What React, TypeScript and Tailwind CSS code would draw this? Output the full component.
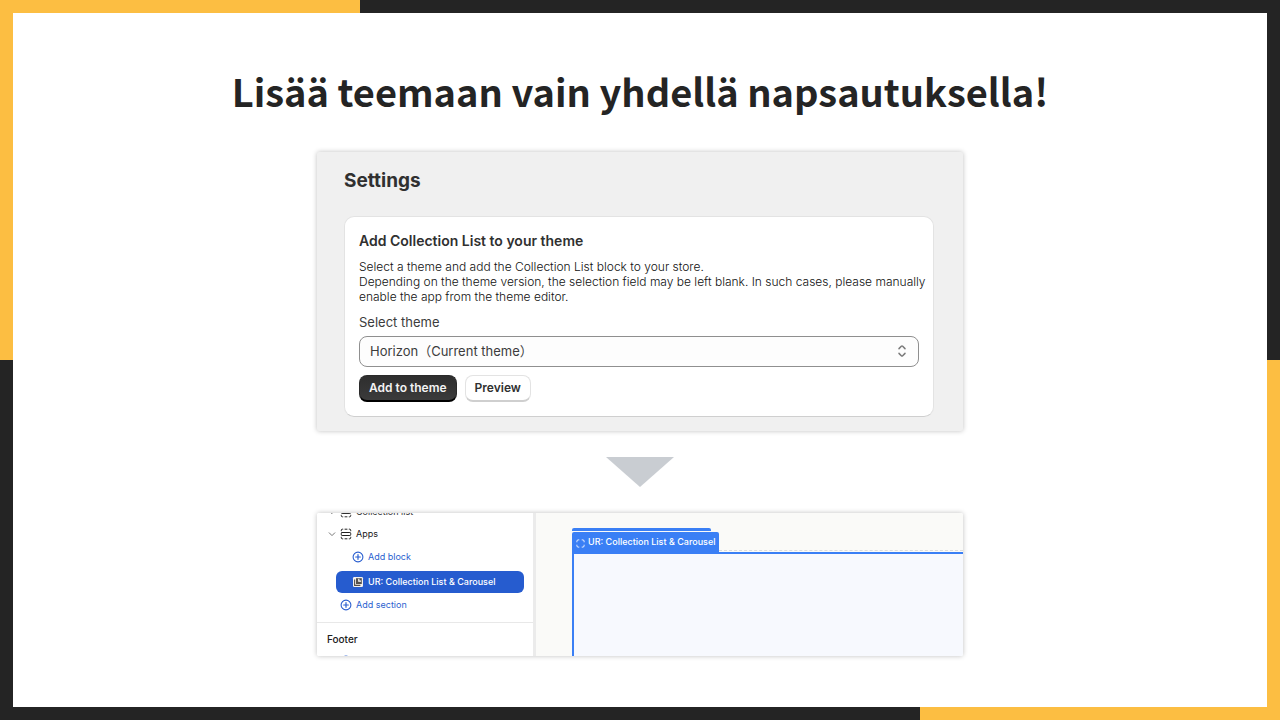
import type { ReactNode } from "react";

// --- Icons ------------------------------------------------------------------

function PlusCircleIcon() {
  return (
    <svg viewBox="0 0 12 12" className="h-3 w-3 shrink-0" fill="none" stroke="currentColor">
      <circle cx="6" cy="6" r="4.9" strokeWidth="1.1" />
      <path d="M6 3.7v4.6M3.7 6h4.6" strokeWidth="1.2" strokeLinecap="round" />
    </svg>
  );
}

function SectionIcon() {
  return (
    <svg viewBox="0 0 12 12" className="h-3 w-3 shrink-0" fill="none" stroke="currentColor" strokeLinecap="round">
      <path d="M1.3 2.8v-.6a1 1 0 0 1 1-1h.5M5 1.2h2M9.2 1.2h.5a1 1 0 0 1 1 1v.6" />
      <rect x="1.3" y="4.5" width="9.4" height="3" rx=".8" />
      <path d="M1.3 9.2v.6a1 1 0 0 0 1 1h.5M5 10.8h2M9.2 10.8h.5a1 1 0 0 0 1-1v-.6" />
    </svg>
  );
}

function ChevronIcon() {
  return (
    <svg viewBox="0 0 8 8" className="h-2 w-2 shrink-0" fill="none" stroke="#777" strokeLinecap="round" strokeLinejoin="round">
      <path d="M1.2 2.8 4 5.6l2.8-2.8" />
    </svg>
  );
}

function AppIcon() {
  return (
    <svg viewBox="0 0 12 12" className="h-3 w-3 shrink-0">
      <rect x="1" y="1" width="10" height="10" rx="1.2" fill="#f4f1ee" />
      <path d="M2.6 3.6v5.8h5.8" fill="none" stroke="#55504c" strokeWidth="1.1" />
      <rect x="4" y="2.2" width="5.8" height="5.8" fill="#55504c" />
      <path d="M6.2 2.8v3h2.9V4.4H7.4V2.8z" fill="#fff" />
    </svg>
  );
}

function BlockIcon() {
  return (
    <svg viewBox="0 0 10 10" className="mt-[2px] h-[9px] w-[9px] shrink-0" fill="none" stroke="currentColor" strokeLinecap="round">
      <path d="M1 3.2V2.4A1.4 1.4 0 0 1 2.4 1h.8M6.8 1h.8A1.4 1.4 0 0 1 9 2.4v.8M9 6.8v.8A1.4 1.4 0 0 1 7.6 9h-.8M3.2 9h-.8A1.4 1.4 0 0 1 1 7.6v-.8" />
    </svg>
  );
}

function SelectIcon() {
  return (
    <svg
      viewBox="0 0 10 14"
      className="pointer-events-none absolute right-3 top-2 h-[14px] w-[10px]"
      fill="none"
      stroke="#7a7a7a"
      strokeWidth="1.5"
      strokeLinecap="round"
      strokeLinejoin="round"
    >
      <path d="M2 4.6 4.3 2.3a1 1 0 0 1 1.4 0L8 4.6M2 9.4l2.3 2.3a1 1 0 0 0 1.4 0L8 9.4" />
    </svg>
  );
}

// --- Settings card ------------------------------------------------------------

function SettingsPanel() {
  return (
    <section className="w-full rounded-xs bg-[#f0f0f0] pt-[17px] pr-[29px] pb-[14px] pl-[27px] shadow-[0_0_5px_rgba(0,0,0,0.25)]">
      <h2 className="text-[19px] leading-6 font-bold text-[#303030]">Settings</h2>
      <div className="mt-[23px] rounded-[10px] border border-[#e3e3e3] border-b-[#cfcfcf] bg-white px-[14px] pt-[14px] pb-[14px]">
        <h3 className="text-[14px] leading-5 font-semibold text-[#303030]">
          Add Collection List to your theme
        </h3>
        <p className="-mr-3 mt-2 text-[12px] leading-[15px] font-light text-[#101010]">
          Select a theme and add the Collection List block to your store.
          <br />
          Depending on the theme version, the selection field may be left blank. In such cases, please manually
          enable the app from the theme editor.
        </p>
        <label htmlFor="theme" className="mt-2 block text-[13px] leading-5 text-[#3c3c3c]">
          Select theme
        </label>
        <div className="relative mt-1">
          <select
            id="theme"
            className="block h-[31px] w-full appearance-none rounded-lg border border-[#8f8f8f] bg-[#fdfdfd] px-[10px] text-[13px] text-[#3c3c3c]"
          >
            <option>Horizon（Current theme）</option>
          </select>
          <SelectIcon />
        </div>
        <div className="mt-2 flex gap-2">
          <button
            type="button"
            className="h-[27px] rounded-lg border border-[#2a2a2a] border-b-2 border-b-black bg-gradient-to-b from-[#2e2e2e] to-[#3b3b3b] px-[9px] text-[12px] font-semibold text-[#f3f3f3]"
          >
            Add to theme
          </button>
          <button
            type="button"
            className="h-[27px] rounded-lg border border-[#e3e3e3] border-b-2 border-b-[#cfcfcf] bg-white px-[9px] text-[12px] font-semibold text-[#303030]"
          >
            Preview
          </button>
        </div>
      </div>
    </section>
  );
}

// --- Theme editor -------------------------------------------------------------

function TreeRow({ className, children }: { className: string; children: ReactNode }) {
  return (
    <button type="button" className={`flex h-[22px] shrink-0 items-center gap-1 text-[9px] ${className}`}>
      {children}
    </button>
  );
}

function EditorSidebar() {
  return (
    <nav className="w-[219px] shrink-0 border-r-3 border-[#ebebeb] bg-white">
      {/* The list is scrolled, so its first row is cut by the panel edge */}
      <div className="-mt-3 flex flex-col">
        <TreeRow className="pl-[11px] text-[#303030]">
          <ChevronIcon />
          <SectionIcon />
          Collection list
        </TreeRow>
        <TreeRow className="pl-[11px] text-[#202020]">
          <ChevronIcon />
          <SectionIcon />
          Apps
        </TreeRow>
        <TreeRow className="mt-px pl-[35px] text-[#2a5fd0]">
          <PlusCircleIcon />
          Add block
        </TreeRow>
        <TreeRow className="mt-[3px] mr-[9px] ml-[19px] rounded-md bg-[#265ccf] pl-4 font-medium text-white">
          <AppIcon />
          UR: Collection List &amp; Carousel
        </TreeRow>
        <TreeRow className="mt-px pl-[23px] text-[#2a5fd0]">
          <PlusCircleIcon />
          Add section
        </TreeRow>
        <div className="mt-[6px] flex flex-col border-t border-[#e8e8e8] pt-[5px]">
          <h3 className="pl-[10px] text-[10px] leading-[22px] font-medium text-[#202020]">Footer</h3>
          <TreeRow className="pl-[23px] text-[#2a5fd0]">
            <PlusCircleIcon />
          </TreeRow>
        </div>
      </div>
    </nav>
  );
}

function EditorCanvas() {
  return (
    <div className="flex min-w-0 flex-1 flex-col bg-[#fafaf8] pt-[15px] pl-9">
      <div className="h-[3px] w-[139px] rounded-t-xs bg-[#3a7ff5]" />
      <div className="mt-px flex items-end">
        <div className="flex h-5 shrink-0 items-center gap-[3px] rounded-t-xs bg-[#3a7ff5] px-1 text-[9px] font-medium text-white">
          <BlockIcon />
          UR: Collection List &amp; Carousel
        </div>
        <div className="mb-px flex-1 border-b border-dashed border-[#dcdcdc]" />
      </div>
      <div className="flex-1 border-t-2 border-l-2 border-[#3a7ff5] bg-[#f7f9fe]" />
    </div>
  );
}

export default function App() {
  return (
    <div className="flex min-h-screen bg-[#242424] bg-[linear-gradient(#fcbe42,#fcbe42),linear-gradient(#fcbe42,#fcbe42)] bg-[size:28.125%_50%] bg-[position:left_top,right_bottom] bg-no-repeat p-[13px] font-['Inter','Noto_Sans_CJK_JP',sans-serif]">
      <main className="flex flex-1 flex-col items-center bg-white px-6 pt-[46px] pb-12">
        <h1 className="text-center font-['Noto_Sans_CJK_JP',sans-serif] text-[38px] leading-[64px] font-bold text-[#242424]">
          Lisää teemaan vain yhdellä napsautuksella!
        </h1>
        <div className="mt-[29px] flex w-full max-w-[646px] flex-col items-center">
          <SettingsPanel />
          <svg viewBox="0 0 68 30" className="my-[26px] h-[30px] w-[68px]">
            <path d="M0 0h68L34 30z" fill="#c9cdd2" />
          </svg>
          <section className="flex h-[143px] w-full overflow-hidden rounded-xs shadow-[0_0_5px_rgba(0,0,0,0.25)]">
            <EditorSidebar />
            <EditorCanvas />
          </section>
        </div>
      </main>
    </div>
  );
}
